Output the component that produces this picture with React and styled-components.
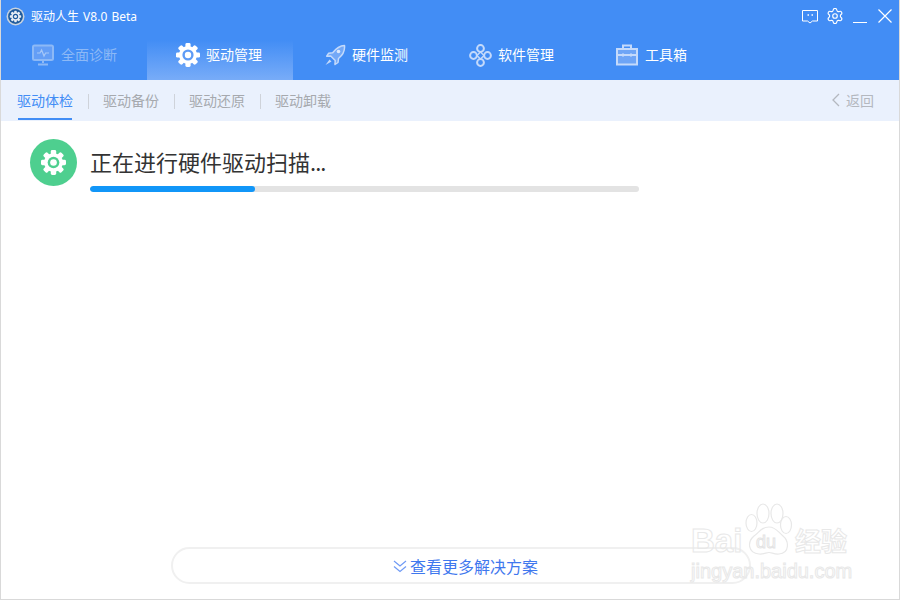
import React from 'react';
import styled, { createGlobalStyle } from 'styled-components';
import { Settings } from 'lucide-react';

const GlobalStyle = createGlobalStyle`
    html, body {
        margin: 0;
        padding: 0;
        background: #fff;
        font-family: "Noto Sans CJK SC", "Liberation Sans", sans-serif;
    }
`;

// eight teeth, a body and a ring cut out of it
const GearShape = ({ color, hole, dot = 3.2 }) => (
    <>
        {[0, 45, 90, 135].map((deg) => (
            <rect key={deg} x="9.4" y="0" width="5.2" height="24" rx="1.4" fill={color} transform={`rotate(${deg} 12 12)`} />
        ))}
        <circle cx="12" cy="12" r="9" fill={color} />
        <circle cx="12" cy="12" r="5.6" fill={hole} />
        <circle cx="12" cy="12" r={dot} fill={color} />
    </>
);

const MonitorIcon = () => (
    <svg width="22" height="22" viewBox="0 0 22 22" fill="none">
        <rect x="1" y="1.5" width="20" height="14.5" rx="1.5" fill="#649ef6" stroke="#8db9f6" strokeWidth="2" />
        <path d="M5 9h3l1.6-3 2.4 6 1.6-3H17" stroke="#a5c7f8" strokeWidth="1.2" />
        <path d="M11 16v3M6 20.5h10" stroke="#8db9f6" strokeWidth="2" />
    </svg>
);

const GearIcon = () => (
    <svg width="24" height="24" viewBox="0 0 24 24">
        <GearShape color="#fff" hole="#5e9bf6" />
    </svg>
);

const RocketIcon = () => (
    <svg width="22" height="22" viewBox="0 0 22 22">
        <path
            d="M20.500 1.500c.5 5-1.500 9.500-6 13l-.5 4-3 2 .2-4-4.500-4.500-4 .2 2-3 4-.5c3.500-4.500 8-7 11.800-7.200z"
            fill="#74a9f7"
            stroke="#c4dafb"
            strokeWidth="1.500"
            strokeLinejoin="round"
        />
        <circle cx="14.500" cy="7.500" r="1.800" fill="#dbe8fc" />
        <path d="M5.500 15.500l2 2-6 3.500z" fill="#c4dafb" />
    </svg>
);

const FlowerIcon = () => (
    <svg width="23" height="23" viewBox="0 0 23 23" fill="none" stroke="#c4dafb" strokeWidth="2">
        <circle cx="11.500" cy="4.500" r="3.400" />
        <circle cx="11.500" cy="18.500" r="3.400" />
        <circle cx="4.500" cy="11.500" r="3.400" />
        <circle cx="18.500" cy="11.500" r="3.400" />
        <path d="M8 11.500l3.500-3.500 3.500 3.500-3.500 3.500z" strokeWidth="1.400" />
    </svg>
);

const BoxIcon = () => (
    <svg width="22" height="22" viewBox="0 0 22 22">
        <path d="M7 5V1.500h8V5" fill="none" stroke="#c4dafb" strokeWidth="2" />
        <rect x="1" y="5" width="20" height="15.500" fill="#6ea5f6" stroke="#c4dafb" strokeWidth="2" />
        <path d="M1 11h20" stroke="#c4dafb" strokeWidth="2" />
        <path d="M7 9.500v3M15 9.500v3" stroke="#c4dafb" strokeWidth="2" />
    </svg>
);

const tabs = [
    { label: '全面诊断', icon: <MonitorIcon />, disabled: true, pad: 31, gap: 7 },
    { label: '驱动管理', icon: <GearIcon />, active: true, pad: 29, gap: 6 },
    { label: '硬件监测', icon: <RocketIcon />, pad: 31, gap: 6 },
    { label: '软件管理', icon: <FlowerIcon />, pad: 30, gap: 6 },
    { label: '工具箱', icon: <BoxIcon />, pad: 31, gap: 7 },
];

const subTabs = ['驱动体检', '驱动备份', '驱动还原', '驱动卸载'];

const App = () => {
    return (
        <>
            <GlobalStyle />
            <Window>
                <TitleBar>
                    <Brand>
                        <Logo>
                            <svg width="19" height="19" viewBox="0 0 18 18">
                                <circle cx="9" cy="9" r="8.500" fill="#c9d3de" />
                                <circle cx="9" cy="9" r="7" fill="#1d5a9c" />
                                <g transform="translate(3.600 3.600) scale(.45)">
                                    <GearShape color="#e8eef5" hole="#1d5a9c" />
                                </g>
                            </svg>
                        </Logo>
                        <AppName>驱动人生 V8.0 Beta</AppName>
                    </Brand>
                    <WindowControls>
                        <ChatIcon width="16" height="15" viewBox="0 0 16 15" fill="none" stroke="#fff" strokeWidth="1">
                            <path d="M.5 1.500h15v10.500h-5L8 14l-2.500-2H.5z" />
                            <path d="M5.500 6h1.500M9.500 6H11" strokeWidth="1.600" />
                        </ChatIcon>
                        <Settings size={16} viewBox="1.500 1.500 21 21" color="#fff" strokeWidth={1.500} />
                        <Minimize />
                        <svg width="14" height="14" viewBox="0 0 14 14" stroke="#fff" strokeWidth="1.200">
                            <path d="M.5.500l13 13M13.500.500l-13 13" />
                        </svg>
                    </WindowControls>
                </TitleBar>
                <NavBar>
                    {tabs.map((tab) => (
                        <NavTab
                            key={tab.label}
                            $active={tab.active}
                            $disabled={tab.disabled}
                            $pad={tab.pad}
                            $gap={tab.gap}
                        >
                            {tab.icon}
                            <NavLabel>{tab.label}</NavLabel>
                        </NavTab>
                    ))}
                </NavBar>
                <SubBar>
                    <SubTabs>
                        {subTabs.map((name, i) => (
                            <SubTab key={name} $active={i === 0} $last={i === subTabs.length - 1}>
                                {name}
                            </SubTab>
                        ))}
                    </SubTabs>
                    <BackLink>
                        <svg width="9" height="14" viewBox="0 0 9 14" fill="none" stroke="#b4b8bf" strokeWidth="1.300">
                            <path d="M8 1L2 7l6 6" />
                        </svg>
                        返回
                    </BackLink>
                </SubBar>
                <Content>
                    <ScanRow>
                        <ScanBadge>
                            <svg width="25" height="25" viewBox="0 0 24 24">
                                <GearShape color="#fff" hole="#4ecf8f" />
                            </svg>
                        </ScanBadge>
                        <ScanBody>
                            <ScanTitle>正在进行硬件驱动扫描<Dots>...</Dots></ScanTitle>
                            <Track>
                                <Fill style={{ width: '30%' }} />
                            </Track>
                        </ScanBody>
                    </ScanRow>
                    <MoreButton>
                        <svg width="14" height="14" viewBox="0 0 14 14" fill="none" stroke="#6f9af5" strokeWidth="1.200">
                            <path d="M1 2l6 5 6-5M1 7.500l6 5 6-5" />
                        </svg>
                        查看更多解决方案
                    </MoreButton>
                    <Watermark>
                        <WatermarkTop>
                            <WatermarkBrand>Bai</WatermarkBrand>
                            <PawBox>
                                <svg width="48" height="52" viewBox="0 0 48 52" fill="none" stroke="#e8e8e8" strokeWidth="1.200">
                                    <ellipse cx="6.500" cy="20" rx="5.500" ry="8.500" />
                                    <ellipse cx="18" cy="10.500" rx="6" ry="9.500" />
                                    <ellipse cx="32" cy="10.500" rx="6" ry="9.500" />
                                    <ellipse cx="41" cy="22" rx="5.500" ry="8.500" />
                                    <path d="M24 24c7 0 9 5 14 9 6 5 7 17-4 18-5 .5-7-1.500-10-1.500S19 51.500 14 51C3 50 2 39 9 33c6-4 7-9 15-9z" />
                                </svg>
                                <WatermarkDu>du</WatermarkDu>
                            </PawBox>
                            <WatermarkWords>经验</WatermarkWords>
                        </WatermarkTop>
                        <WatermarkUrl>jingyan.baidu.com</WatermarkUrl>
                    </Watermark>
                </Content>
            </Window>
        </>
    );
};

export default App;

const Window = styled.div`
    width: 900px;
    height: 600px;
    box-sizing: border-box;
    display: flex;
    flex-direction: column;
    overflow: hidden;
    border: 1px solid #d9d9d9;
    border-top: 0;
    background: #fff;
`;

const TitleBar = styled.header`
    height: 40px;
    margin: 0 -1px;
    flex: none;
    display: flex;
    align-items: flex-start;
    justify-content: space-between;
    background: #428df5;
`;

const Brand = styled.div`
    display: flex;
    align-items: center;
    padding: 7px 0 0 6px;
    gap: 6px;
`;

const Logo = styled.span`
    display: flex;
`;

const AppName = styled.span`
    font-family: "Noto Sans", "Noto Sans CJK SC", sans-serif;
    font-size: 12px;
    line-height: 18px;
    word-spacing: 1px;
    color: #fff;
`;

const WindowControls = styled.div`
    display: flex;
    align-items: center;
    gap: 10px;
    padding: 8px 8px 0 0;
`;

const ChatIcon = styled.svg`
    margin-right: -1px;
`;

const Minimize = styled.span`
    width: 14px;
    height: 1px;
    margin: 12px 1px 0 0;
    background: #fff;
`;

const NavBar = styled.nav`
    height: 40px;
    margin: 0 -1px;
    flex: none;
    display: flex;
    padding-left: 1px;
    background: #428df5;
`;

const NavTab = styled.div`
    width: 146px;
    box-sizing: border-box;
    display: flex;
    align-items: center;
    gap: ${(p) => p.$gap}px;
    padding: 0 0 10px ${(p) => p.$pad}px;
    color: ${(p) => (p.$disabled ? '#8db9f6' : '#fff')};
    background: ${(p) => (p.$active ? 'linear-gradient(to bottom, #428df5, #78acf8)' : 'transparent')};
`;

const NavLabel = styled.span`
    padding-bottom: 2px;
    font-size: 14px;
`;

const SubBar = styled.div`
    height: 41px;
    flex: none;
    display: flex;
    align-items: stretch;
    justify-content: space-between;
    background: #eaf1fd;
`;

const SubTabs = styled.div`
    display: flex;
    align-items: center;
    padding-left: 16px;
`;

const SubTab = styled.div`
    position: relative;
    height: 100%;
    box-sizing: border-box;
    display: flex;
    align-items: center;
    padding: 0 15px 2px 0;
    margin-right: 15px;
    font-size: 14px;
    color: ${(p) => (p.$active ? '#428df5' : '#a6a9ae')};

    &::after {
        content: '';
        display: ${(p) => (p.$last ? 'none' : 'block')};
        position: absolute;
        right: -1px;
        top: 14px;
        width: 1px;
        height: 15px;
        background: #cfd3da;
    }

    &::before {
        content: '';
        display: ${(p) => (p.$active ? 'block' : 'none')};
        position: absolute;
        left: 1px;
        bottom: 1px;
        width: 54px;
        height: 2px;
        background: #428df5;
    }
`;

const BackLink = styled.div`
    display: flex;
    align-items: center;
    gap: 6px;
    padding: 0 25px 2px 0;
    font-size: 14px;
    color: #b4b8bf;
`;

const Content = styled.main`
    position: relative;
    flex: 1;
    display: flex;
    flex-direction: column;
    justify-content: space-between;
    padding: 18px 0 15px;
`;

const ScanRow = styled.section`
    display: flex;
    align-items: flex-start;
    gap: 13px;
    padding-left: 29px;
`;

const ScanBadge = styled.div`
    width: 47px;
    height: 47px;
    border-radius: 50%;
    display: flex;
    align-items: center;
    justify-content: center;
    background: #4ecf8f;
`;

const ScanBody = styled.div`
    width: 549px;
    display: flex;
    flex-direction: column;
    gap: 10px;
`;

const ScanTitle = styled.h2`
    margin: 7px 0 0;
    font-size: 22px;
    font-weight: 400;
    line-height: 30px;
    color: #333;
`;

const Dots = styled.span`
    letter-spacing: -1px;
`;

const Track = styled.div`
    height: 6px;
    border-radius: 3px;
    overflow: hidden;
    background: #e3e3e3;
`;

const Fill = styled.div`
    height: 100%;
    border-radius: 3px;
    background: #1196f8;
`;

const MoreButton = styled.button`
    width: 580px;
    height: 37px;
    margin-left: 170px;
    box-sizing: border-box;
    display: flex;
    align-items: center;
    justify-content: center;
    gap: 3px;
    padding: 0 0 0 9px;
    border: 2px solid #f0f0f0;
    border-radius: 19px;
    background: #fff;
    font-family: inherit;
    font-size: 16px;
    color: #3f78ee;
`;

const Watermark = styled.div`
    position: absolute;
    right: 47px;
    bottom: 16px;
    width: 161px;
    pointer-events: none;
    display: flex;
    flex-direction: column;
    gap: 4px;
`;

const WatermarkTop = styled.div`
    height: 52px;
    display: flex;
    align-items: flex-end;
    white-space: nowrap;
`;

const WatermarkBrand = styled.span`
    flex: none;
    width: 54px;
    font-family: "Liberation Sans", sans-serif;
    font-size: 33px;
    font-weight: 700;
    line-height: 28px;
    color: transparent;
    -webkit-text-stroke: 1px #e8e8e8;
`;

const PawBox = styled.div`
    position: relative;
    flex: none;
    width: 48px;
    height: 52px;
    display: flex;
`;

const WatermarkDu = styled.span`
    position: absolute;
    left: 11px;
    bottom: 2px;
    font-family: "Liberation Sans", sans-serif;
    font-size: 18px;
    color: transparent;
    -webkit-text-stroke: 1px #e4e4e4;
`;

const WatermarkWords = styled.span`
    flex: none;
    margin-left: 2px;
    font-size: 26px;
    font-weight: 700;
    line-height: 30px;
    color: transparent;
    -webkit-text-stroke: 1px #e8e8e8;
`;

const WatermarkUrl = styled.span`
    font-family: "Liberation Sans", sans-serif;
    font-size: 20px;
    line-height: 24px;
    white-space: nowrap;
    color: transparent;
    -webkit-text-stroke: 1px #e8e8e8;
`;
